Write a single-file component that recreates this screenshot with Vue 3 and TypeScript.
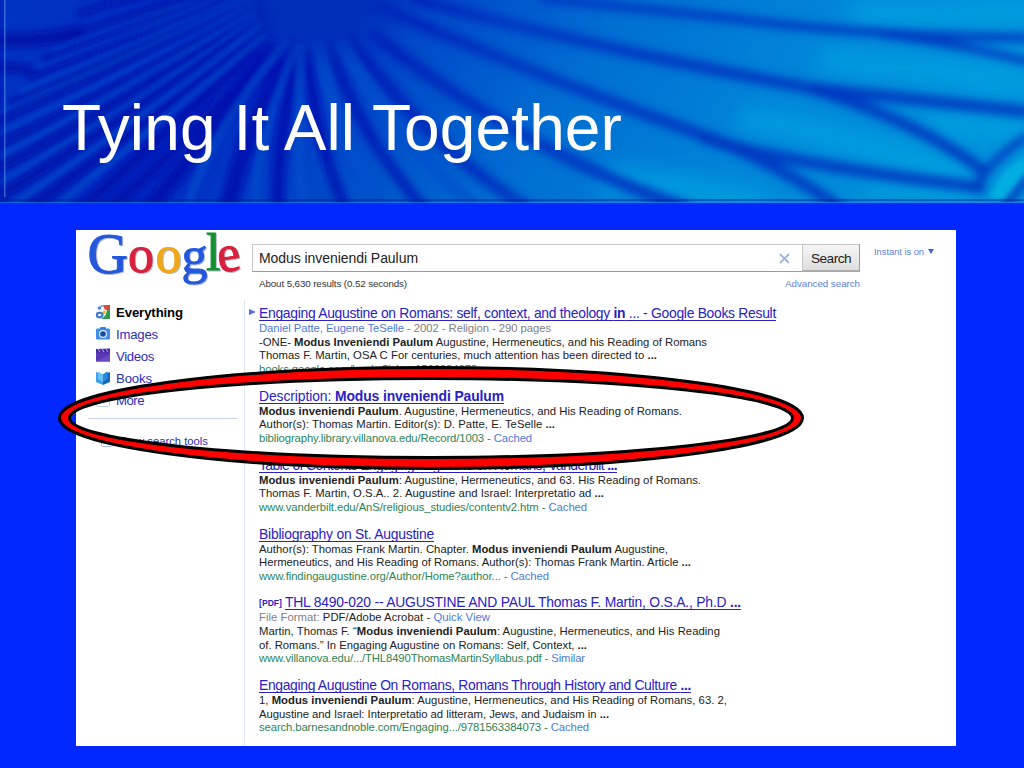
<script setup lang="ts">
import { ref } from 'vue';

type Kind = 'b' | 'link' | 'url' | 'muted' | 'plain';

interface Run {
  text: string;
  kind: Kind;
}

interface Line {
  runs: Run[];
  width: number;
}

interface Result {
  id: number;
  tag?: string;
  title: Line;
  lines: Line[];
}

interface Ray {
  d: string;
  w: number;
}

const b = (text: string): Run => ({ text, kind: 'b' });
const t = (text: string): Run => ({ text, kind: 'plain' });
const link = (text: string): Run => ({ text, kind: 'link' });
const url = (text: string): Run => ({ text, kind: 'url' });
const muted = (text: string): Run => ({ text, kind: 'muted' });

const query = ref('Modus inveniendi Paulum');

const navigation = [
  { id: 'everything', label: 'Everything', width: 67 },
  { id: 'images', label: 'Images', width: 42 },
  { id: 'videos', label: 'Videos', width: 38 },
  { id: 'books', label: 'Books', width: 36 },
  { id: 'more', label: 'More', width: 28 },
];
const activeItemId = ref('everything');

const results: Result[] = [
  {
    id: 1,
    title: {
      runs: [t('Engaging Augustine on Romans: self, context, and theology '), b('in'), t(' ... - Google Books Result')],
      width: 517,
    },
    lines: [
      { runs: [link('Daniel Patte, Eugene TeSelle'), muted(' - 2002 - Religion - 290 pages')], width: 292 },
      { runs: [t('-ONE- '), b('Modus Inveniendi Paulum'), t(' Augustine, Hermeneutics, and his Reading of Romans')], width: 448 },
      { runs: [t('Thomas F. Martin, OSA C For centuries, much attention has been directed to '), b('...')], width: 398 },
      { runs: [url('books.google.com/books?isbn=1563384070')], width: 218 },
    ],
  },
  {
    id: 2,
    title: { runs: [t('Description: '), b('Modus inveniendi Paulum')], width: 245 },
    lines: [
      { runs: [b('Modus inveniendi Paulum'), t('. Augustine, Hermeneutics, and His Reading of Romans.')], width: 423 },
      { runs: [t('Author(s): Thomas Martin. Editor(s): D. Patte, E. TeSelle '), b('...')], width: 296 },
      { runs: [url('bibliography.library.villanova.edu/Record/1003 - '), link('Cached')], width: 273 },
    ],
  },
  {
    id: 3,
    title: { runs: [t('Table of Contents Engaging Augustine on Romans, Vanderbilt '), b('...')], width: 358 },
    lines: [
      { runs: [b('Modus inveniendi Paulum'), t(': Augustine, Hermeneutics, and 63. His Reading of Romans.')], width: 442 },
      { runs: [t('Thomas F. Martin, O.S.A.. 2. Augustine and Israel: Interpretatio ad '), b('...')], width: 345 },
      { runs: [url('www.vanderbilt.edu/AnS/religious_studies/contentv2.htm - '), link('Cached')], width: 328 },
    ],
  },
  {
    id: 4,
    title: { runs: [t('Bibliography on St. Augustine')], width: 175 },
    lines: [
      { runs: [t('Author(s): Thomas Frank Martin. Chapter. '), b('Modus inveniendi Paulum'), t(' Augustine,')], width: 409 },
      { runs: [t('Hermeneutics, and His Reading of Romans. Author(s): Thomas Frank Martin. Article '), b('...')], width: 432 },
      { runs: [url('www.findingaugustine.org/Author/Home?author... - '), link('Cached')], width: 290 },
    ],
  },
  {
    id: 5,
    tag: '[PDF]',
    title: { runs: [t('THL 8490-020 -- AUGUSTINE AND PAUL Thomas F. Martin, O.S.A., Ph.D '), b('...')], width: 456 },
    lines: [
      { runs: [muted('File Format: '), t('PDF/Adobe Acrobat - '), link('Quick View')], width: 231 },
      { runs: [t('Martin, Thomas F. “'), b('Modus inveniendi Paulum'), t(': Augustine, Hermeneutics, and His Reading')], width: 461 },
      { runs: [t('of. Romans.” In Engaging Augustine on Romans: Self, Context, '), b('...')], width: 328 },
      { runs: [url('www.villanova.edu/.../THL8490ThomasMartinSyllabus.pdf - '), link('Similar')], width: 326 },
    ],
  },
  {
    id: 6,
    title: { runs: [t('Engaging Augustine On Romans, Romans Through History and Culture '), b('...')], width: 432 },
    lines: [
      { runs: [t('1, '), b('Modus inveniendi Paulum'), t(': Augustine, Hermeneutics, and His Reading of Romans, 63. 2,')], width: 468 },
      { runs: [t('Augustine and Israel: Interpretatio ad litteram, Jews, and Judaism in '), b('...')], width: 350 },
      { runs: [url('search.barnesandnoble.com/Engaging.../9781563384073 - '), link('Cached')], width: 330 },
    ],
  },
];

// shadows of the fan in the banner, all starting near the top centre
const darkRays: Ray[] = [
  { d: 'M-10 40 Q50 42 84 30', w: 14 },
  { d: 'M-10 66 L34 70', w: 9 },
  { d: 'M78 14 Q130 -4 190 -14', w: 6 },
  { d: 'M55 42 Q140 10 215 -8', w: 6 },
  { d: 'M42 60 Q150 20 228 -8', w: 5 },
  { d: 'M28 78 Q140 34 238 -6', w: 5 },
  { d: 'M10 104 Q130 52 250 -8', w: 6 },
  { d: 'M-4 122 Q120 66 264 -6', w: 6 },
  { d: 'M-4 146 Q120 88 266 0', w: 7 },
  { d: 'M-4 170 Q110 110 266 8', w: 8 },
  { d: 'M0 196 Q120 122 272 10', w: 9 },
  { d: 'M30 208 Q150 120 272 24', w: 10 },
  { d: 'M80 210 Q180 120 270 36', w: 12 },
  { d: 'M108 210 Q200 130 276 44', w: 12 },
  { d: 'M148 210 Q220 120 284 44', w: 16 },
  { d: 'M228 210 Q244 130 296 40', w: 18 },
  { d: 'M278 210 Q276 130 302 44', w: 14 },
  { d: 'M346 210 Q318 150 306 50', w: 12 },
  { d: 'M426 210 Q360 140 326 36', w: 12 },
];

const dimRays: Ray[] = [
  { d: 'M530 210 Q420 140 344 30', w: 13 },
  { d: 'M690 210 Q520 150 370 32', w: 13 },
  { d: 'M846 212 Q780 164 700 134 Q520 70 370 2', w: 12 },
  { d: 'M700 136 Q770 162 985 188', w: 12 },
  { d: 'M985 172 Q920 122 810 88 Q600 50 410 -2', w: 12 },
  { d: 'M810 88 Q900 98 1030 112', w: 12 },
  { d: 'M1030 38 Q860 36 720 17 L540 -2', w: 9 },
  { d: 'M880 34 Q960 44 1030 62', w: 8 },
  { d: 'M974 192 Q988 160 1028 136', w: 8 },
  { d: 'M1000 212 L1030 176', w: 8 },
];

const lightRays: Ray[] = [
  { d: 'M52 50 Q150 14 224 -8', w: 3 },
  { d: 'M34 68 Q150 26 236 -8', w: 3 },
  { d: 'M20 92 Q140 42 246 -6', w: 4 },
  { d: 'M-4 114 Q120 60 250 -2', w: 4 },
  { d: 'M-4 134 Q120 76 256 2', w: 4 },
  { d: 'M-4 158 Q110 98 256 10', w: 5 },
  { d: 'M-4 184 Q120 114 258 16', w: 5 },
  { d: 'M10 206 Q140 120 262 24', w: 6 },
  { d: 'M56 206 Q150 130 266 34', w: 7 },
  { d: 'M188 206 Q210 130 288 40', w: 9 },
  { d: 'M256 206 Q254 140 298 44', w: 8 },
  { d: 'M304 206 Q294 140 302 44', w: 10 },
  { d: 'M380 206 Q334 130 318 40', w: 13 },
  { d: 'M474 206 Q390 130 340 40', w: 14 },
];

const glowRays: Ray[] = [
  { d: 'M600 180 Q680 180 770 210', w: 26 },
  { d: 'M740 118 Q840 132 970 180', w: 22 },
  { d: 'M820 60 Q930 68 1030 84', w: 22 },
  { d: 'M850 12 Q940 20 1030 10', w: 22 },
  { d: 'M930 122 L1030 132', w: 16 },
  { d: 'M870 186 L980 200', w: 12 },
];

const vFit = {
  mounted(el: HTMLElement, binding: { value: number }) {
    const natural = el.getBoundingClientRect().width;
    const count = (el.textContent ?? '').length;
    el.style.letterSpacing = `${(binding.value - natural) / count}px`;
  },
};
</script>

<template>
  <main class="slide">
    <header class="banner">
      <svg class="banner-art" viewBox="0 0 1024 203" preserveAspectRatio="none">
        <defs>
          <linearGradient id="sea" x1="0" y1="0" x2="1" y2="0.12">
            <stop offset="0" stop-color="#0034c0" />
            <stop offset="0.25" stop-color="#0028c0" />
            <stop offset="0.42" stop-color="#0048c8" />
            <stop offset="0.6" stop-color="#006ed2" />
            <stop offset="0.8" stop-color="#0084d8" />
            <stop offset="1" stop-color="#0092da" />
          </linearGradient>
          <linearGradient id="shade" gradientUnits="userSpaceOnUse" x1="0" y1="0" x2="1024" y2="0">
            <stop offset="0" stop-color="#0008a4" />
            <stop offset="0.3" stop-color="#0010b0" />
            <stop offset="0.5" stop-color="#0034c2" />
            <stop offset="1" stop-color="#0038c0" />
          </linearGradient>
          <radialGradient id="hub">
            <stop offset="0" stop-color="#002eb8" />
            <stop offset="0.45" stop-color="#002eb8" stop-opacity="0.9" />
            <stop offset="1" stop-color="#002eb8" stop-opacity="0" />
          </radialGradient>
          <filter id="soft" filterUnits="userSpaceOnUse" x="-30" y="-30" width="1084" height="263">
            <feGaussianBlur stdDeviation="3.2" />
          </filter>
          <filter id="softer" filterUnits="userSpaceOnUse" x="-30" y="-30" width="1084" height="263">
            <feGaussianBlur stdDeviation="4.4" />
          </filter>
          <filter id="fine" filterUnits="userSpaceOnUse" x="-30" y="-30" width="1084" height="263">
            <feGaussianBlur stdDeviation="2" />
          </filter>
          <filter id="wide" filterUnits="userSpaceOnUse" x="-30" y="-30" width="1084" height="263">
            <feGaussianBlur stdDeviation="10" />
          </filter>
        </defs>
        <rect width="1024" height="203" fill="url(#sea)" />
        <g filter="url(#wide)" fill="none" stroke="#00a4e0" stroke-opacity="0.75">
          <path v-for="ray in glowRays" :key="ray.d" :d="ray.d" :stroke-width="ray.w" />
        </g>
        <g filter="url(#soft)" fill="none" stroke="url(#shade)" stroke-opacity="0.85">
          <path v-for="ray in darkRays" :key="ray.d" :d="ray.d" :stroke-width="ray.w" />
        </g>
        <g filter="url(#softer)" fill="none" stroke="url(#shade)" stroke-opacity="0.9">
          <path v-for="ray in dimRays" :key="ray.d" :d="ray.d" :stroke-width="ray.w" />
        </g>
        <g filter="url(#fine)" fill="none" stroke="#0a50cc" stroke-opacity="0.6">
          <path v-for="ray in lightRays" :key="ray.d" :d="ray.d" :stroke-width="ray.w" />
        </g>
        <ellipse cx="318" cy="4" rx="100" ry="68" fill="url(#hub)" />
        <path d="M990 198 Q1000 168 1026 156 L1026 170 L1002 200 Z" fill="#00aee2" filter="url(#fine)" />
        <rect x="0" y="0" width="4" height="203" fill="#0018b8" opacity="0.5" />
        <rect x="4" y="0" width="1.5" height="197" fill="#4a84e8" opacity="0.7" />
        <rect x="4" y="199" width="1020" height="2" fill="#001c90" opacity="0.45" />
        <rect x="0" y="202" width="1024" height="1" fill="#1484f0" opacity="0.6" />
      </svg>
      <h1 class="banner-title"><span v-fit="560">Tying It All Together</span></h1>
    </header>

    <section class="page">
      <div class="top">
        <svg class="logo" width="164" height="60" viewBox="0 0 164 60">
          <text class="big blue" x="7.5" y="42.5">G</text>
          <text class="red" x="48" y="42">o</text>
          <text class="gold" x="75.5" y="42">o</text>
          <text class="blue" x="101.5" y="43">g</text>
          <text class="green" x="126" y="40">l</text>
          <text class="red" x="138" y="41" transform="rotate(-8 149 32)">e</text>
        </svg>
        <div class="search">
          <div class="search-row">
            <div class="search-box">
              <span v-fit="159">{{ query }}</span>
              <svg width="11" height="11" viewBox="0 0 11 11">
                <path d="M1 1 L10 10 M10 1 L1 10" stroke="#98b4e8" stroke-width="1.8" fill="none" />
              </svg>
            </div>
            <button class="btn-search"><span v-fit="40">Search</span></button>
          </div>
          <div class="search-info">
            <span v-fit="148">About 5,630 results (0.52 seconds)</span>
            <span v-fit="75" class="advanced">Advanced search</span>
          </div>
        </div>
        <div class="instant"><span v-fit="50">Instant is on</span><i class="caret"></i></div>
      </div>

      <div class="content">
        <aside class="sidebar">
          <ul>
            <li
                v-for="item in navigation"
                :key="item.id"
                class="nav-item"
                :class="{ 'active': item.id === activeItemId }"
                @click="activeItemId = item.id"
            >
              <svg class="nav-icon" width="16" height="16" viewBox="0 0 16 16">
                <g v-if="item.id === 'everything'">
                  <rect x="1" y="1" width="14" height="14" fill="#f2f6fd" />
                  <path d="M8 1 H15 V6 H12 Q9 6 8 1 Z" fill="#dc4a3c" />
                  <path d="M12 5 H15 V15 H6 Q12 12 12 5 Z" fill="#2f9a4c" />
                  <path d="M7 8 L10 6 L11 9 L8 11 Z" fill="#f2b632" />
                  <circle cx="4.4" cy="4" r="1.6" fill="#3a78d8" />
                  <ellipse cx="4.6" cy="11" rx="2.8" ry="2.2" fill="none" stroke="#3a78d8" stroke-width="2" />
                  <path d="M5.5 2.6 L7.5 1.6" stroke="#3a78d8" stroke-width="1.4" />
                </g>
                <g v-else-if="item.id === 'images'">
                  <rect x="1" y="2.5" width="14" height="11" rx="1" fill="#4090e8" />
                  <rect x="5" y="1" width="6" height="3" rx="1" fill="#3a84dc" />
                  <circle cx="8" cy="8" r="4" fill="#d8ecff" />
                  <circle cx="8" cy="8" r="2.8" fill="#1c4a9c" />
                </g>
                <g v-else-if="item.id === 'videos'">
                  <rect x="1" y="4" width="14" height="9.5" fill="#5b35b8" />
                  <path d="M1 1 L15 0.5 V4.5 H1 Z" fill="#45289a" />
                  <path d="M3 1 L5 4 M7 0.9 L9 4 M11 0.8 L13 4" stroke="#a890e4" stroke-width="1.2" />
                  <path d="M1 13.5 L15 6 V13.5 Z" fill="#6c48c6" />
                </g>
                <g v-else-if="item.id === 'books'">
                  <path d="M1 1 L8 3.5 V14 L1 11 Z" fill="#3ea0ec" />
                  <path d="M15 1 L8 3.5 V14 L15 11 Z" fill="#1668b8" />
                  <path d="M3 0.5 L8 3.5 V11 L3 8 Z" fill="#6cc0f6" />
                  <path d="M12.5 0 L8 3.5 V11 L12.5 8 Z" fill="#2b8ad8" />
                </g>
                <g v-else>
                  <rect x="1.5" y="0.5" width="13" height="13" rx="1" fill="#fff" stroke="#c4cdf0" />
                  <path d="M5 5.5 H11 L8 9 Z" fill="#7e8ce0" />
                </g>
              </svg>
              <span v-fit="item.width">{{ item.label }}</span>
            </li>
          </ul>
          <div class="tools">
            <svg width="12" height="12" viewBox="0 0 12 12">
              <rect x="0.5" y="0.5" width="11" height="11" rx="1" fill="#fff" stroke="#b0bcec" />
              <path d="M6 3 V9 M3 6 H9" stroke="#5566d0" />
            </svg>
            <span v-fit="92">Show search tools</span>
          </div>
        </aside>

        <div class="results">
          <article v-for="result in results" :key="result.id" class="result">
            <h3 class="result-title">
              <i v-if="result.id === 1" class="marker"></i>
              <span v-if="result.tag" v-fit="23" class="tag">{{ result.tag }}</span>
              <a v-fit="result.title.width"><span v-for="(run, i) in result.title.runs" :key="i" :class="run.kind">{{ run.text }}</span></a>
            </h3>
            <p v-for="(line, n) in result.lines" :key="n" class="result-line">
              <span v-fit="line.width"><span v-for="(run, i) in line.runs" :key="i" :class="run.kind">{{ run.text }}</span></span>
            </p>
          </article>
        </div>
      </div>
    </section>

    <!-- ring drawn over the second result -->
    <svg class="ring" width="750" height="108" viewBox="0 0 750 108">
      <path
          fill-rule="evenodd"
          d="M2.5 54 A371.5 50.5 0 0 1 745.5 54 A371.5 50.5 0 0 1 2.5 54 Z M12.5 54 A361.5 39.5 0 0 1 735.5 54 A361.5 39.5 0 0 1 12.5 54 Z"
          fill="#ff0000"
          stroke="#000"
          stroke-width="3"
      />
    </svg>
  </main>
</template>

<style>
body {
  margin: 0;
  overflow: hidden;
}
</style>

<style scoped>
.slide {
  position: relative;
  width: 1024px;
  height: 768px;
  overflow: hidden;
  background: #0028ff;
  font-family: "Liberation Sans", Arial, sans-serif;
  white-space: pre;
}

.banner {
  position: relative;
  height: 203px;
  overflow: hidden;
}

.banner-art {
  position: absolute;
  inset: 0;
  width: 1024px;
  height: 203px;
}

.banner-title {
  position: relative;
  margin: 0;
  padding: 91px 0 0 62px;
  color: #fff;
  font-size: 64px;
  line-height: 74px;
  font-weight: 400;
}

.page {
  box-sizing: border-box;
  width: 880px;
  height: 516px;
  margin: 27px 0 0 76px;
  background: #fff;
}

.top {
  display: flex;
  height: 70px;
}

.logo {
  flex: none;
  margin-left: 4px;
  overflow: visible;
  filter: drop-shadow(1px 1px 0.5px #8c96b0aa);
  font-family: "Liberation Serif", serif;
  font-size: 52px;
}

.logo .big {
  font-size: 56px;
}

.blue {
  fill: #2458dc;
  stroke: #2458dc;
}

.red {
  fill: #d8203c;
  stroke: #d8203c;
}

.gold {
  fill: #f0a818;
  stroke: #f0a818;
}

.green {
  fill: #149030;
  stroke: #149030;
}

.search {
  width: 608px;
  margin: 14px 0 0 8px;
}

.search-row {
  display: flex;
  height: 28px;
}

.search-box {
  box-sizing: border-box;
  flex: 1;
  display: flex;
  align-items: center;
  justify-content: space-between;
  padding: 0 12px 0 6px;
  border: 1px solid #c8c8c8;
  border-bottom-color: #999;
  border-right: none;
  color: #222;
  font-size: 14px;
}

.btn-search {
  box-sizing: border-box;
  width: 58px;
  padding: 2px 0 0;
  border: 1px solid #c4c4c4;
  border-right-color: #999;
  border-bottom: 2px solid #aaa;
  background: linear-gradient(#f6f6f6, #dedede);
  color: #222;
  font-family: inherit;
  font-size: 13.6px;
}

.search-info {
  display: flex;
  justify-content: space-between;
  padding: 5px 0 0 7px;
  color: #333;
  font-size: 9.8px;
  line-height: 14px;
}

.search-info .advanced {
  color: #5c80d8;
}

.instant {
  display: flex;
  align-items: center;
  gap: 4px;
  height: 14px;
  margin: 14.4px 0 0 14px;
  color: #5c80d8;
  font-size: 9.4px;
}

.caret {
  border: 3px solid transparent;
  border-top: 5px solid #4468c8;
  border-bottom: 0;
}

.content {
  display: flex;
  height: 446px;
}

.sidebar {
  box-sizing: border-box;
  width: 169px;
  padding: 1px 7px 0 12px;
  border-right: 1px solid #dde5f6;
}

.sidebar ul {
  list-style: none;
  margin: 0;
  padding: 0 0 6px 7px;
  border-bottom: 1px solid #ccd6ee;
}

.nav-item {
  display: flex;
  align-items: center;
  gap: 5px;
  height: 22.2px;
  color: #2c2cbc;
  font-size: 13.2px;
  cursor: pointer;
}

.nav-item.active {
  color: #000;
  font-weight: 700;
}

.nav-icon {
  flex: none;
}

.tools {
  display: flex;
  align-items: center;
  gap: 3px;
  padding: 15px 0 0 13px;
  color: #2c2cbc;
  font-size: 11.2px;
  line-height: 14px;
}

.results {
  padding: 5px 0 0 14px;
}

.result {
  margin-bottom: 11.2px;
}

.result-title {
  position: relative;
  display: flex;
  gap: 3px;
  margin: 0;
  height: 17px;
  color: #2a20c4;
  font-size: 13.9px;
  line-height: 17px;
  font-weight: 400;
}

.result-title a {
  text-decoration: underline;
  text-decoration-thickness: 1px;
  text-decoration-skip-ink: none;
  text-underline-offset: 1.5px;
}

.marker {
  position: absolute;
  left: -10px;
  top: 4px;
  border: 3.5px solid transparent;
  border-left: 7px solid #5070d8;
  border-right: 0;
}

.tag {
  font-size: 8.6px;
  font-weight: 700;
  line-height: 19px;
}

.result-line {
  margin: 0;
  height: 13.6px;
  color: #222;
  font-size: 11.3px;
  line-height: 13.6px;
}

.b {
  font-weight: 700;
}

.link {
  color: #4c7ad8;
}

.url {
  color: #2c8454;
}

.muted {
  color: #808080;
}

.ring {
  position: absolute;
  left: 57px;
  top: 363.5px;
}
</style>
